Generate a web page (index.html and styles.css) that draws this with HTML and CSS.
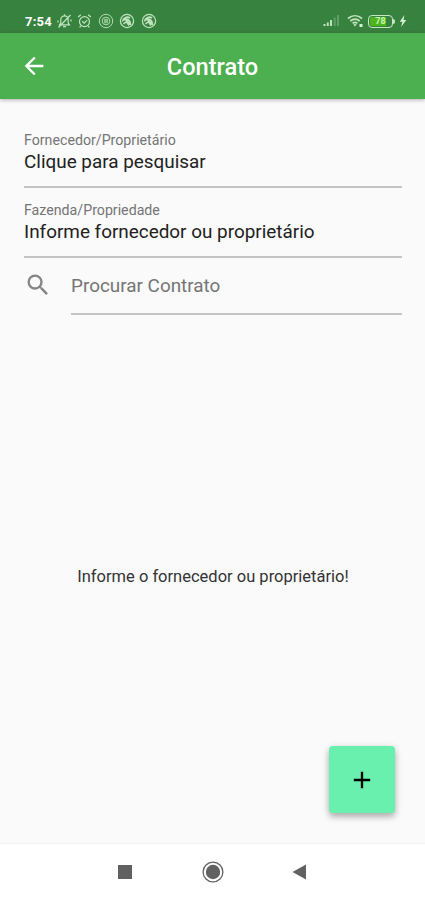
FILE: index.html
```html
<!DOCTYPE html>
<html lang="pt">
<head>
  <meta charset="UTF-8"/>
  <meta name="viewport" content="width=device-width, initial-scale=1.0"/>
  <title>Contrato</title>
  <link rel="stylesheet" href="styles.css">
</head>
<body>
  <div class="status-bar">
    <span class="clock">7:54</span>
    <div class="status-icons">
      <svg width="15" height="16" viewBox="0 0 15 16">
        <path d="M2.5 11.8h10l-1.3-1.8V6.500a3.700 3.700 0 0 0-7.400 0V10zM6 13.600h3M7.500 1.300v1.400M13.500 2L1.500 14.500M1 7.500v2M14 6.500v2"/>
      </svg>
      <svg width="15" height="16" viewBox="0 0 15 16">
        <circle cx="7.5" cy="8.6" r="5"/>
        <path d="M1.2 4l2.6-2.300M13.800 4l-2.600-2.300M5.200 8.300l2 1.900 3-3M3.800 13l-1.200 1.400M11.200 13l1.200 1.400"/>
      </svg>
      <svg width="16" height="16" viewBox="0 0 16 16">
        <circle class="thin" cx="8" cy="8" r="6.700"/>
        <circle class="thin" cx="8" cy="8" r="3.800"/>
        <path d="M7 5.800v4.400M9 5.800v4.400"/>
      </svg>
      <svg width="16" height="16" viewBox="0 0 16 16">
        <circle cx="8" cy="8" r="6.600"/>
        <path class="bold" d="M3.500 8.500C4 5 8 3 11 5M5 7c3-2 6 0 6.500 3.500M4.500 11l3-2.500 2.500 4M7 7l5 5"/>
      </svg>
      <svg width="16" height="16" viewBox="0 0 16 16">
        <circle cx="8" cy="8" r="6.600"/>
        <path class="bold" d="M3.500 8.500C4 5 8 3 11 5M5 7c3-2 6 0 6.500 3.500M4.500 11l3-2.500 2.500 4M7 7l5 5"/>
      </svg>
    </div>
    <div class="status-right">
      <svg class="signal" width="17" height="12" viewBox="0 0 17 12">
        <path d="M1.500 11V9M4.800 11V7.500M8 11V5"/>
        <path class="dim" d="M11.700 11V2.500M15 11V0"/>
      </svg>
      <svg class="wifi" width="17" height="14" viewBox="0 0 17 14">
        <path d="M1 4.500c4.300-3.700 9.700-3.700 14 0M3.300 7c3-2.500 6.400-2.500 9.400 0M5.600 9.300c1.500-1.300 3.300-1.300 4.800 0"/>
        <path class="fill" d="M6.300 10.200h3.400L8 12.500zM12.500 10h3v3h-3z"/>
      </svg>
      <div class="battery"><span>78</span></div>
      <svg class="bolt" width="8" height="12" viewBox="0 0 8 13">
        <path class="fill" d="M5.500 0L.5 7.200h2.800L2 13l5.500-7.500H4.600z"/>
      </svg>
    </div>
  </div>

  <header class="app-bar">
    <svg class="back" width="28" height="28" viewBox="0 0 24 24">
      <path d="M20 11H7.830l5.590-5.590L12 4l-8 8 8 8 1.410-1.410L7.830 13H20z"/>
    </svg>
    <h1>Contrato</h1>
  </header>

  <main>
    <div class="field">
      <label>Fornecedor/Proprietário</label>
      <p>Clique para pesquisar</p>
    </div>
    <div class="field">
      <label>Fazenda/Propriedade</label>
      <p>Informe fornecedor ou proprietário</p>
    </div>
    <div class="search">
      <svg width="28" height="28" viewBox="0 0 24 24">
        <path d="M15.500 14h-.790l-.280-.270A6.470 6.470 0 0 0 16 9.500 6.500 6.500 0 1 0 9.500 16c1.610 0 3.090-.590 4.230-1.570l.270.280v.790l5 4.990L20.490 19zm-6 0a4.500 4.500 0 1 1 0-9 4.500 4.500 0 0 1 0 9z"/>
      </svg>
      <div class="search-input">Procurar Contrato</div>
    </div>
    <p class="message">Informe o fornecedor ou proprietário!</p>
    <button class="fab">
      <svg width="28" height="28" viewBox="0 0 24 24">
        <path d="M19 13h-6v6h-2v-6H5v-2h6V5h2v6h6z"/>
      </svg>
    </button>
  </main>

  <nav class="nav-bar">
    <svg width="24" height="24" viewBox="0 0 24 24">
      <path d="M5 5h14v14H5z"/>
    </svg>
    <svg width="24" height="24" viewBox="0 0 24 24">
      <circle class="ring" cx="12" cy="12" r="9.900"/>
      <circle cx="12" cy="12" r="7.200"/>
    </svg>
    <svg width="24" height="24" viewBox="0 0 24 24">
      <path d="M17 4.500v15L3.500 12z"/>
    </svg>
  </nav>
</body>
</html>
```
FILE: styles.css
```css
* {
  margin: 0;
  padding: 0;
  box-sizing: border-box;
}
body {
  height: 100vh;
  display: flex;
  flex-direction: column;
  background: #fafafa;
  font-family: Roboto, sans-serif;
  color: #212121;
  overflow: hidden;
}
svg {
  display: block;
  flex: none;
}
.status-bar {
  height: 33px;
  flex: none;
  background: #388240;
  display: flex;
  align-items: center;
  padding: 9px 18px 0 25px;
  color: #e8f5e9;
}
.clock {
  width: 32px;
  font-size: 13px;
  font-weight: 700;
  letter-spacing: 0.2px;
  color: #fff;
}
.status-icons {
  display: flex;
  gap: 5.4px;
}
.status-bar svg {
  fill: none;
  stroke: #c0e5bd;
  stroke-width: 1.2;
}
.status-bar .thin {
  stroke-width: 0.9;
}
.status-bar .bold {
  stroke-width: 1.6;
}
.status-bar .dim {
  opacity: 0.3;
}
.status-bar .fill {
  fill: #d5efd3;
  stroke: none;
}
.status-right {
  margin-left: auto;
  display: flex;
  align-items: center;
}
.status-bar .signal {
  stroke-width: 2;
  margin-right: 7px;
}
.status-bar .wifi {
  stroke-width: 1.7;
  margin-right: 4px;
}
.battery {
  position: relative;
  width: 25px;
  height: 13px;
  border: 1.5px solid #c5e8c0;
  border-radius: 4px;
  padding: 1px;
  margin-right: 6px;
}
.battery::after {
  content: "";
  position: absolute;
  right: -3px;
  top: 3px;
  width: 2px;
  height: 5px;
  border-radius: 0 2px 2px 0;
  background: #c5e8c0;
}
.battery span {
  display: block;
  height: 9px;
  border-radius: 2px;
  background: linear-gradient(90deg, #4fb51e 78%, #388240 78%);
  color: #c9f5b0;
  font-size: 9px;
  font-weight: 700;
  line-height: 9px;
  text-align: center;
}
.app-bar {
  height: 66px;
  flex: none;
  background: #4caf50;
  display: flex;
  align-items: center;
  padding: 0 20px;
  box-shadow: 0 1px 4px rgba(0, 0, 0, 0.3);
}
.back {
  fill: #fff;
}
.app-bar h1 {
  flex: 1;
  padding: 2px 28px 0 0;
  text-align: center;
  font-size: 23.6px;
  font-weight: 500;
  color: #fff;
}
main {
  flex: 1;
  display: flex;
  flex-direction: column;
  padding: 31px 23px 30px 24px;
}
.field {
  height: 58px;
  border-bottom: 2px solid #c4c4c4;
  margin-bottom: 12px;
}
.field label {
  display: block;
  font-size: 14.2px;
  line-height: 20px;
  color: #757575;
}
.field p {
  font-size: 18.9px;
  line-height: 24px;
}
.search {
  display: flex;
  height: 46px;
  margin-top: -1px;
}
.search svg {
  margin-top: 2px;
  fill: #858585;
}
.search-input {
  flex: 1;
  margin-left: 19px;
  font-size: 18.9px;
  line-height: 34px;
  color: #757575;
  border-bottom: 2px solid #c4c4c4;
}
.message {
  margin-top: 252px;
  font-size: 16.5px;
  line-height: 20px;
  text-align: center;
  color: #333;
}
.fab {
  width: 66px;
  height: 67px;
  margin: auto 7px 0 auto;
  display: flex;
  align-items: center;
  justify-content: center;
  border: none;
  border-radius: 4px;
  background: #69f0ae;
  box-shadow: 0 4px 6px rgba(0, 0, 0, 0.25), 0 1px 8px rgba(0, 0, 0, 0.1);
}
.nav-bar {
  height: 57px;
  flex: none;
  display: flex;
  justify-content: center;
  gap: 64px;
  padding-top: 16px;
  background: #fff;
  border-top: 1px solid #f2f2f2;
}
.nav-bar svg {
  fill: #616161;
}
.nav-bar .ring {
  fill: none;
  stroke: #616161;
  stroke-width: 1.3;
}
```
